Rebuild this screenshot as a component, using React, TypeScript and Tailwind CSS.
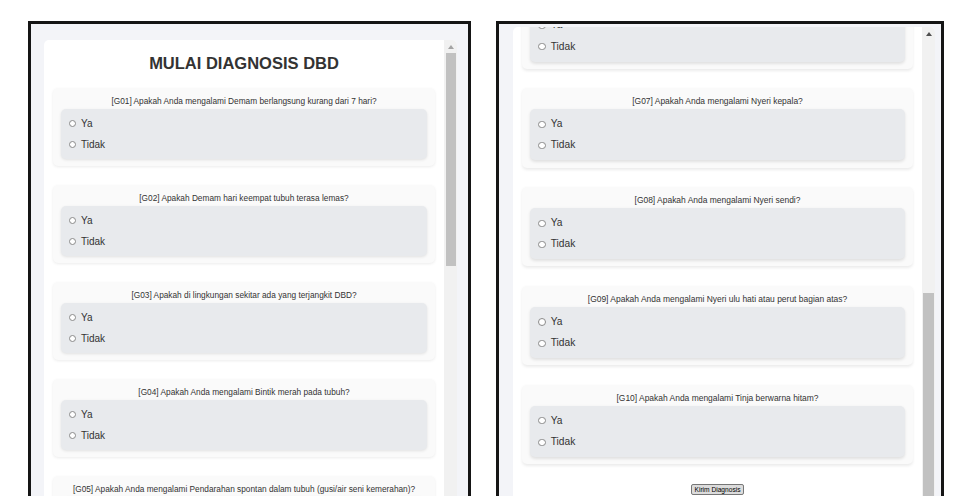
import React from "react";

const questions = [
  "[G01] Apakah Anda mengalami Demam berlangsung kurang dari 7 hari?",
  "[G02] Apakah Demam hari keempat tubuh terasa lemas?",
  "[G03] Apakah di lingkungan sekitar ada yang terjangkit DBD?",
  "[G04] Apakah Anda mengalami Bintik merah pada tubuh?",
  "[G05] Apakah Anda mengalami Pendarahan spontan dalam tubuh (gusi/air seni kemerahan)?",
  "[G06] Apakah Anda mengalami Nyeri otot?",
  "[G07] Apakah Anda mengalami Nyeri kepala?",
  "[G08] Apakah Anda mengalami Nyeri sendi?",
  "[G09] Apakah Anda mengalami Nyeri ulu hati atau perut bagian atas?",
  "[G10] Apakah Anda mengalami Tinja berwarna hitam?",
];

function Option({ label }: { label: string }) {
  return (
    <div className="flex items-center h-[21px] pl-[8px]">
      <span className="w-[7px] h-[7px] rounded-full border border-[#8a8a8a] bg-white mr-[5px]" />
      <span className="text-[10px] leading-none text-[#333]">{label}</span>
    </div>
  );
}

function Question({ text }: { text: string }) {
  return (
    <div className="mx-[9px] mb-[19px] rounded-[5px] bg-[#fafafa] px-[8px] pt-[8px] pb-[7px] shadow-[0_1px_3px_rgba(0,0,0,0.08)]">
      <p className="text-center text-[8.3px] leading-[10px] text-[#333] whitespace-nowrap">{text}</p>
      <div className="mt-[3px] h-[50px] rounded-[5px] bg-[#e8eaed] pt-[4px] shadow-[0_1px_3px_rgba(0,0,0,0.1)]">
        <Option label="Ya" />
        <Option label="Tidak" />
      </div>
    </div>
  );
}

function FormContent() {
  return (
    <div className="pt-[13px] font-['Liberation_Sans',Arial,sans-serif]">
      <h1 className="text-center text-[16.5px] leading-[20px] font-bold text-[#333] mb-[15px]">
        MULAI DIAGNOSIS DBD
      </h1>
      {questions.map((q) => (
        <Question key={q} text={q} />
      ))}
      <div className="flex justify-center">
        <button className="border border-[#767676] bg-[#dcdcdc] rounded-[2px] px-[2px] py-[1px] text-[6.5px] leading-[7px] text-black font-['Liberation_Sans',Arial,sans-serif]">
          Kirim Diagnosis
        </button>
      </div>
    </div>
  );
}

export default function App() {
  return (
    <div className="h-[496px] overflow-hidden bg-white flex pt-[21px] pl-[28px] gap-[25px]">
      {/* left window */}
      <div className="w-[443px] h-[490px] shrink-0 overflow-hidden border-[3px] border-[#151515] bg-[#f3f4f8] pt-[16px] pl-[13px]">
        <div className="flex h-[600px] w-[413px] overflow-hidden rounded-[5px] bg-white">
          <div className="w-[400px] shrink-0">
            <FormContent />
          </div>
          <div className="w-[13px] shrink-0 bg-[#f1f1f1] flex flex-col items-center">
            <div className="h-[13px] flex items-center justify-center">
              <span className="border-l-[3px] border-r-[3px] border-b-[4px] border-l-transparent border-r-transparent border-b-[#a3a3a3]" />
            </div>
            <div className="w-[10px] h-[213px] bg-[#c1c1c1]" />
          </div>
        </div>
      </div>

      {/* right window, scrolled */}
      <div className="w-[448px] h-[490px] shrink-0 overflow-hidden border-[3px] border-[#151515] bg-[#f3f4f8] pt-[3px] pl-[14px]">
        <div className="flex h-[600px] w-[422px] overflow-hidden rounded-[5px] bg-white">
          <div className="w-[409px] shrink-0 overflow-hidden">
            <div className="[zoom:1.02] -mt-[570px]">
              <FormContent />
            </div>
          </div>
          <div className="w-[13px] shrink-0 bg-[#f1f1f1] flex flex-col items-center">
            <div className="h-[13px] flex items-center justify-center">
              <span className="border-l-[3px] border-r-[3px] border-b-[4px] border-l-transparent border-r-transparent border-b-[#505050]" />
            </div>
            <div className="mt-[253px] w-[11px] h-[320px] bg-[#c1c1c1]" />
          </div>
        </div>
      </div>
    </div>
  );
}
